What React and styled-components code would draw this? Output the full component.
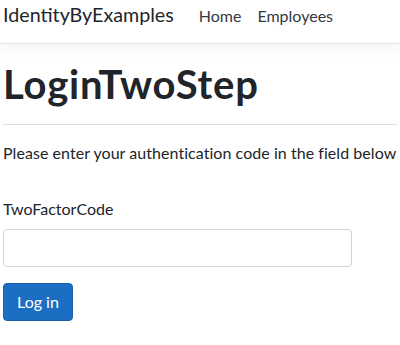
import React from 'react';
import styled, { createGlobalStyle } from 'styled-components';

const GlobalStyle = createGlobalStyle`
  html, body {
    margin: 0;
    background: #fff;
  }
  body {
    font-family: Lato, "Open Sans", sans-serif;
    font-size: 16px;
    line-height: 1.5;
    color: #212529;
  }
`;

const Header = styled.header`
  height: 43px;
  display: flex;
  align-items: baseline;
  padding: 0 3px;
  background: #fff;
  border-bottom: 1px solid #e5e5e5;
  box-shadow: 0 4px 12px rgba(0, 0, 0, 0.05);
`;

const Brand = styled.a`
  font-size: 19.7px;
  line-height: 30px;
  color: #212529;
  text-decoration: none;
  margin-right: 17px;
`;

const NavList = styled.ul`
  display: flex;
  list-style: none;
  margin: 0;
  padding: 0;
`;

const NavLink = styled.a`
  display: block;
  padding: 0 8px;
  color: #343a40;
  text-decoration: none;
`;

const Main = styled.main`
  padding: 0 3px;
`;

const Title = styled.h1`
  font-size: 40px;
  font-weight: 700;
  letter-spacing: 0.8px;
  line-height: 1.2;
  margin: 16px 0 0;
`;

const Rule = styled.hr`
  border: 0;
  border-top: 1px solid #dedede;
  margin: 16px 0;
`;

const Text = styled.p`
  margin: 0 0 32px;
  letter-spacing: 0.05px;
`;

const Form = styled.form`
  width: 349px;
`;

const Label = styled.label`
  display: block;
  margin-bottom: 8px;
`;

const Input = styled.input`
  display: block;
  box-sizing: border-box;
  width: 100%;
  height: 38px;
  padding: 6px 12px;
  font: inherit;
  border: 1px solid #ced4da;
  border-radius: 4px;
  margin-bottom: 16px;
`;

const Button = styled.button`
  height: 38px;
  padding: 6px 13px;
  font: inherit;
  color: #fff;
  background: #1b6ec2;
  border: 1px solid #1861ac;
  border-radius: 4px;
`;

export default function App() {
  return (
    <>
      <GlobalStyle />
      <Header>
        <Brand href="#">IdentityByExamples</Brand>
        <NavList>
          <li><NavLink href="#">Home</NavLink></li>
          <li><NavLink href="#">Employees</NavLink></li>
        </NavList>
      </Header>
      <Main>
        <Title>LoginTwoStep</Title>
        <Rule />
        <Text>Please enter your authentication code in the field below</Text>
        <Form onSubmit={(e) => e.preventDefault()}>
          <Label htmlFor="code">TwoFactorCode</Label>
          <Input id="code" type="text" />
          <Button type="submit">Log in</Button>
        </Form>
      </Main>
    </>
  );
}
